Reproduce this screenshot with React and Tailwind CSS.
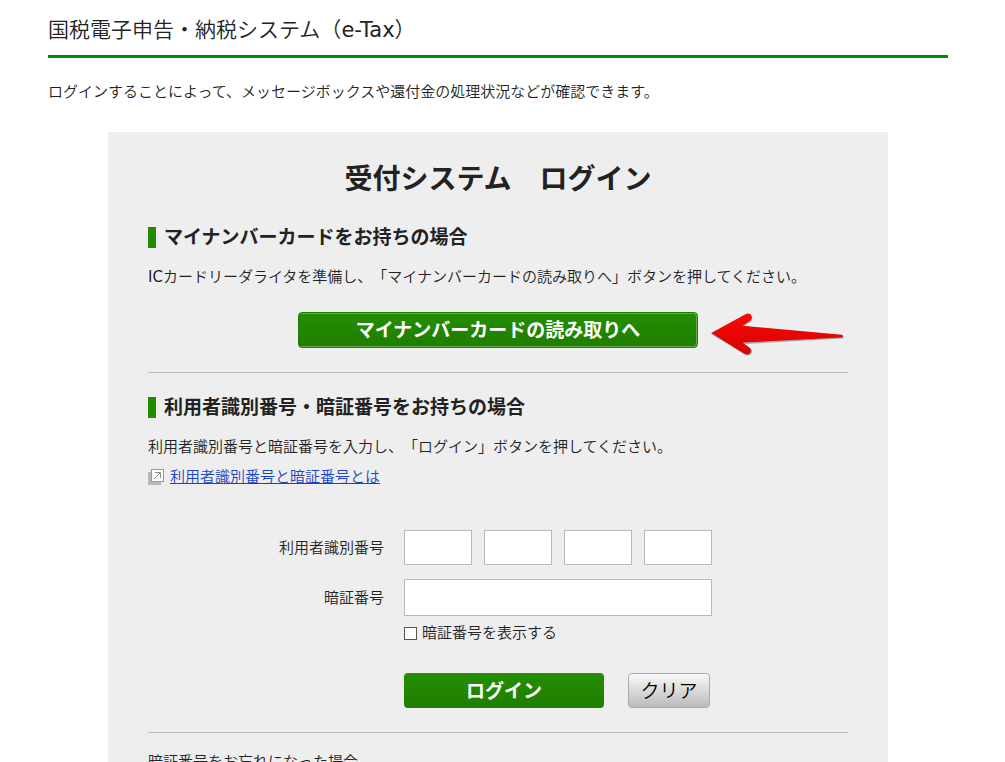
const Arrow = () => (
  <svg
    className="absolute left-full top-0 ml-3"
    width="136"
    height="46"
    viewBox="0 0 136 46"
    aria-hidden="true"
  >
    <defs>
      <linearGradient id="arrowFill" x1="0" y1="0" x2="0" y2="1">
        <stop offset="0" stopColor="#fa0808" />
        <stop offset="1" stopColor="#d40202" />
      </linearGradient>
    </defs>
    <path
      d="M1.2 22 L35.5 3.2 C38.5 1.6 42 3.4 42.3 5.8 C42.5 7.6 41.7 9 40.3 10 L34 14 L132 23.8 C133.8 24.2 133.8 26.2 132 26.5 L34 32 L40.5 36.5 C42.2 38 42.6 40 41.2 41.8 C39.8 43.6 37 43.8 35 42.7 Z"
      fill="#777"
      opacity="0.6"
    />
    <path
      d="M1.2 21 L35.5 2.2 C38.5 0.6 41.5 2.4 41.8 4.8 C42 6.6 41.2 8 39.8 9 L32.5 13.8 L131.5 22.8 C133.4 23.2 133.4 25.2 131.5 25.5 L32.5 30.5 L39.2 35.5 C41 36.9 41.4 39.1 40.2 40.9 C38.8 42.9 36.4 42.9 34.4 41.8 Z"
      fill="url(#arrowFill)"
    />
  </svg>
);

const NewWindowIcon = () => (
  <svg width="16" height="16" viewBox="0 0 16 16" aria-hidden="true">
    <rect x="0" y="3" width="13" height="13" fill="#b8b8b8" />
    <rect x="3.5" y="0.5" width="12" height="12" fill="#fff" stroke="#999" />
    <path d="M6 10 L12 4 M7 3.5 H12.5 V9" fill="none" stroke="#888" />
  </svg>
);

const SectionTitle = ({ children }) => (
  <h3 className="border-l-8 border-[#228b00] pl-2 text-[19px] leading-[21px] font-bold">
    {children}
  </h3>
);

const idFields = [1, 2, 3, 4];

const App = () => {
  return (
    <main className="max-w-[948px] pl-12 pt-[14px] bg-white text-[#222] text-[15px] leading-[26px] font-[350] font-['DejaVu_Sans','Noto_Sans_CJK_JP',sans-serif] [text-spacing-trim:space-all]">
      <h1 className="border-b-3 border-[#008f00] pb-[9px] text-[21px] leading-8 font-[350]">
        国税電子申告・納税システム（<span className="font-normal">e-Tax</span>）
      </h1>
      <p className="mt-[21px]">
        ログインすることによって、メッセージボックスや還付金の処理状況などが確認できます。
      </p>

      <div className="mx-auto mt-[27px] max-w-[780px] bg-[#eee] px-10 pt-[30px] pb-10">
        <h2 className="text-center text-[28px] leading-9 font-bold">
          受付システム　ログイン
        </h2>

        <section className="mt-[29px]">
          <SectionTitle>マイナンバーカードをお持ちの場合</SectionTitle>
          <p className="mt-4">
            <span className="font-normal">IC</span>
            カードリーダライタを準備し、「マイナンバーカードの読み取りへ」ボタンを押してください。
          </p>
          <div className="relative mx-auto mt-[22px] w-[400px]">
            <button
              type="button"
              className="block h-9 w-full rounded-[4px] border border-[#1f7d00] bg-linear-to-b from-[#248f00] to-[#1f7d00] text-[19px] leading-8 font-bold text-white shadow-[inset_-1px_1px_0_#62ab4b,inset_-1px_-1px_0_#62ab4b]"
            >
              マイナンバーカードの読み取りへ
            </button>
            <Arrow />
          </div>
        </section>

        <section className="mt-6 border-t border-[#b8b8b8] pt-6">
          <SectionTitle>利用者識別番号・暗証番号をお持ちの場合</SectionTitle>
          <p className="mt-4">
            利用者識別番号と暗証番号を入力し、「ログイン」ボタンを押してください。
          </p>
          <p className="mt-1 flex items-center gap-[6px]">
            <NewWindowIcon />
            <a href="#about" className="text-[#1a43c4] underline">
              利用者識別番号と暗証番号とは
            </a>
          </p>

          <form className="mt-10 grid grid-cols-[236px_308px] items-center gap-x-5">
            <label htmlFor="user-id-1" className="text-right">
              利用者識別番号
            </label>
            <div className="flex gap-3">
              {idFields.map((n) => (
                <input
                  key={n}
                  id={`user-id-${n}`}
                  type="text"
                  maxLength={4}
                  aria-label={n > 1 ? `利用者識別番号 ${n}` : undefined}
                  className="h-[35px] w-[68px] border border-[#b8b8b8] bg-white px-2"
                />
              ))}
            </div>

            <label htmlFor="password" className="mt-[14px] text-right">
              暗証番号
            </label>
            <input
              id="password"
              type="password"
              className="mt-[14px] h-[37px] border border-[#b8b8b8] bg-white px-2"
            />

            <label className="col-start-2 mt-1 flex items-center gap-[5px]">
              <input
                type="checkbox"
                className="size-[13px] appearance-none border border-[#555] bg-white checked:bg-[#228b00]"
              />
              暗証番号を表示する
            </label>

            <div className="col-start-2 mt-[27px] flex gap-6">
              <button
                type="submit"
                className="h-[35px] w-[200px] rounded-[4px] bg-linear-to-b from-[#248f00] to-[#1f7d00] text-[19px] leading-8 font-bold text-white"
              >
                ログイン
              </button>
              <button
                type="reset"
                className="h-[35px] w-[82px] rounded-[4px] border border-[#aaa] bg-linear-to-b from-[#fafafa] to-[#bbb] text-[19px] leading-8 text-black"
              >
                クリア
              </button>
            </div>
          </form>
        </section>

        <section className="mt-6 border-t border-[#b8b8b8] pt-4">
          <p>暗証番号をお忘れになった場合</p>
        </section>
      </div>
    </main>
  );
};

export default App;
